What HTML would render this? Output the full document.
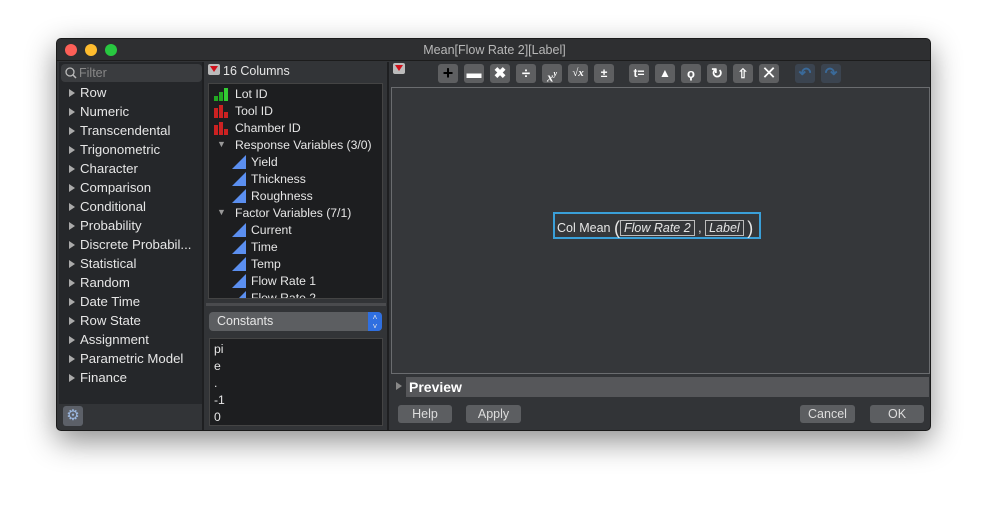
<!DOCTYPE html>
<html><head><style>
*{margin:0;padding:0;box-sizing:border-box}
body{width:987px;height:505px;background:#fff;font-family:"Liberation Sans",sans-serif;font-size:12.5px;color:#e6e6e6;position:relative;overflow:hidden}
.a{position:absolute}
.win{left:56px;top:38px;width:875px;height:393px;background:#323437;border-radius:5px;box-shadow:0 10px 30px rgba(0,0,0,.45);border:1px solid #1a1a1a;overflow:hidden}
.title{left:0;top:0;width:875px;height:22px;background:#2e2f31;border-bottom:1px solid #1c1c1c;text-align:center;line-height:22px;color:#b8b8b8;font-size:12.5px}
.dot{width:12px;height:12px;border-radius:50%;top:5px}
.item{position:absolute;left:12px;font-size:13.2px}
.item:before{content:"";display:inline-block;border-left:6px solid #aaa;border-top:4px solid transparent;border-bottom:4px solid transparent;margin-right:5px}
.col{position:absolute;font-size:12.2px}
.tb{position:absolute;top:25px;width:20px;height:19px;background:#5e5f61;border-radius:3px;color:#fff;text-align:center;font-weight:bold;line-height:19px;font-size:15px}
.btn{position:absolute;top:366px;height:18px;background:#5c5e61;border-radius:3px;text-align:center;line-height:18px;font-size:12.5px;color:#ddd}
</style></head><body>
<div class="a win">
 <div class="a title">Mean[Flow Rate 2][Label]</div>
 <div class="a dot" style="left:8px;background:#fd5f57"></div>
 <div class="a dot" style="left:28px;background:#febc2e"></div>
 <div class="a dot" style="left:48px;background:#28c840"></div>
 <div class="a" style="left:2px;top:23px;width:143px;height:342px;background:#25272a"></div>
 <div class="a" style="left:4px;top:25px;width:141px;height:18px;background:#3a3c3f;border-radius:4px;color:#888;line-height:18px;padding-left:18px">Filter</div>
 <svg class="a" style="left:8px;top:28px" width="12" height="12"><circle cx="5" cy="5" r="4" stroke="#bbb" stroke-width="1.3" fill="none"/><line x1="8" y1="8" x2="11" y2="11" stroke="#bbb" stroke-width="1.5"/></svg>
 <div class="a" style="left:0;top:46px;width:146px">
  <div class="item" style="top:0">Row</div><div class="item" style="top:19px">Numeric</div><div class="item" style="top:38px">Transcendental</div><div class="item" style="top:57px">Trigonometric</div><div class="item" style="top:76px">Character</div><div class="item" style="top:95px">Comparison</div><div class="item" style="top:114px">Conditional</div><div class="item" style="top:133px">Probability</div><div class="item" style="top:152px">Discrete Probabil...</div><div class="item" style="top:171px">Statistical</div><div class="item" style="top:190px">Random</div><div class="item" style="top:209px">Date Time</div><div class="item" style="top:228px">Row State</div><div class="item" style="top:247px">Assignment</div><div class="item" style="top:266px">Parametric Model</div><div class="item" style="top:285px">Finance</div>
 </div>
 <div class="a" style="left:6px;top:367px;width:20px;height:20px;background:#5c6068;border-radius:3px;color:#9cb8e0;text-align:center;line-height:20px;font-size:15px">⚙</div>
 <div class="a" style="left:145px;top:23px;width:2px;height:370px;background:#1e1f21"></div>
 <div class="a" style="left:151px;top:25px;width:12px;height:11px;background:#bbb;border-radius:2px"></div>
 <div class="a" style="left:153px;top:27px;border-left:4px solid transparent;border-right:4px solid transparent;border-top:6px solid #d0101a"></div>
 <div class="a" style="left:166px;top:25px;font-size:12.5px">16 Columns</div>
 <div class="a" style="left:151px;top:44px;width:175px;height:216px;background:#1d1e20;border:1px solid #444;overflow:hidden">
  <svg class="a" style="left:4px;top:3px" width="16" height="14"><rect x="1" y="9" width="4" height="5" fill="#2a2"/><rect x="6" y="5" width="4" height="9" fill="#2a2"/><rect x="11" y="1" width="4" height="13" fill="#3c3"/></svg>
  <div class="col" style="left:26px;top:3px">Lot ID</div>
  <svg class="a" style="left:4px;top:20px" width="16" height="14"><rect x="1" y="4" width="4" height="10" fill="#c22"/><rect x="6" y="1" width="4" height="13" fill="#c22"/><rect x="11" y="8" width="4" height="6" fill="#c22"/></svg>
  <div class="col" style="left:26px;top:20px">Tool ID</div>
  <svg class="a" style="left:4px;top:37px" width="16" height="14"><rect x="1" y="4" width="4" height="10" fill="#c22"/><rect x="6" y="1" width="4" height="13" fill="#c22"/><rect x="11" y="8" width="4" height="6" fill="#c22"/></svg>
  <div class="col" style="left:26px;top:37px">Chamber ID</div>
  <div class="col" style="left:8px;top:55px;color:#999;font-size:9px">▼</div><div class="col" style="left:26px;top:54px">Response Variables (3/0)</div>
  <div class="col" style="left:42px;top:71px">Yield</div><div class="col" style="left:42px;top:88px">Thickness</div><div class="col" style="left:42px;top:105px">Roughness</div>
  <div class="col" style="left:8px;top:123px;color:#999;font-size:9px">▼</div><div class="col" style="left:26px;top:122px">Factor Variables (7/1)</div>
  <div class="col" style="left:42px;top:139px">Current</div><div class="col" style="left:42px;top:156px">Time</div><div class="col" style="left:42px;top:173px">Temp</div><div class="col" style="left:42px;top:190px">Flow Rate 1</div><div class="col" style="left:42px;top:207px">Flow Rate 2</div>
  <svg class="a" style="left:22px;top:70px" width="16" height="160" fill="#5b8ff0"><polygon points="1,15 15,1 15,15"/><polygon points="1,32 15,18 15,32"/><polygon points="1,49 15,35 15,49"/><polygon points="1,83 15,69 15,83"/><polygon points="1,100 15,86 15,100"/><polygon points="1,117 15,103 15,117"/><polygon points="1,134 15,120 15,134"/><polygon points="1,151 15,137 15,151"/></svg>
 </div>
 <div class="a" style="left:149px;top:264px;width:180px;height:3px;background:#4a4b4e"></div>
 <div class="a" style="left:152px;top:273px;width:173px;height:19px;background:#5c5e61;border-radius:4px;line-height:19px;padding-left:8px;font-size:12.5px">Constants</div>
 <div class="a" style="left:311px;top:273px;width:14px;height:19px;background:#2f6fe0;border-radius:0 4px 4px 0;font-size:8px;text-align:center;line-height:9px;padding-top:1px">˄<br>˅</div>
 <div class="a" style="left:152px;top:299px;width:174px;height:88px;background:#1d1e20;border:1px solid #444">
  <div class="col" style="left:4px;top:3px">pi</div><div class="col" style="left:4px;top:20px">e</div><div class="col" style="left:4px;top:37px">.</div><div class="col" style="left:4px;top:54px">-1</div><div class="col" style="left:4px;top:71px">0</div>
 </div>
 <div class="a" style="left:330px;top:23px;width:2px;height:370px;background:#1e1f21"></div>
 <div class="a" style="left:336px;top:24px;width:12px;height:11px;background:#bbb;border-radius:2px"></div>
 <div class="a" style="left:338px;top:26px;border-left:4px solid transparent;border-right:4px solid transparent;border-top:6px solid #d0101a"></div>
 <div class="tb" style="left:381px;color:#000;font-size:18px">+</div>
 <div class="tb" style="left:407px">▬</div>
 <div class="tb" style="left:433px">✖</div>
 <div class="tb" style="left:459px">÷</div>
 <div class="tb" style="left:485px;font-family:'Liberation Serif';font-style:italic;font-size:13px">x<sup style="font-size:8px">y</sup></div>
 <div class="tb" style="left:511px;font-family:'Liberation Serif';font-style:italic;font-size:11px">√x</div>
 <div class="tb" style="left:537px;font-size:12px">±</div>
 <div class="tb" style="left:572px;font-size:12px">t=</div>
 <div class="tb" style="left:598px;font-size:12px">▲</div>
 <div class="tb" style="left:624px;font-size:13px">ϙ</div>
 <div class="tb" style="left:650px;font-size:14px">↻</div>
 <div class="tb" style="left:676px;font-size:13px">⇧</div>
 <div class="tb" style="left:702px;font-weight:normal;font-size:18px">✕</div>
 <div class="tb" style="left:738px;background:#3b4450;color:#3a6a9a">↶</div>
 <div class="tb" style="left:764px;background:#3b4450;color:#3a6a9a">↷</div>
 <div class="a" style="left:334px;top:48px;width:539px;height:287px;background:#35373a;border:1px solid #6a6c6f"></div>
 <div class="a" style="left:496px;top:173px;width:208px;height:27px;border:2px solid #3a9fd8;padding:4px 0 0 2px;font-size:12.5px;white-space:nowrap">Col Mean <span style="font-size:18px;vertical-align:-2px">(</span><span style="border:1px solid #bbb;font-style:italic;padding:0 3px">Flow Rate 2</span> , <span style="border:1px solid #bbb;font-style:italic;padding:0 3px">Label</span> <span style="font-size:18px;vertical-align:-2px">)</span></div>
 <div class="a" style="left:339px;top:343px;border-left:6px solid #888;border-top:4px solid transparent;border-bottom:4px solid transparent"></div>
 <div class="a" style="left:349px;top:338px;width:523px;height:20px;background:#56575a;font-weight:bold;font-size:14px;line-height:20px;padding-left:3px;color:#fff">Preview</div>
 <div class="btn" style="left:341px;width:54px">Help</div>
 <div class="btn" style="left:409px;width:55px">Apply</div>
 <div class="btn" style="left:743px;width:55px">Cancel</div>
 <div class="btn" style="left:813px;width:54px">OK</div>
</div>
</body></html>
